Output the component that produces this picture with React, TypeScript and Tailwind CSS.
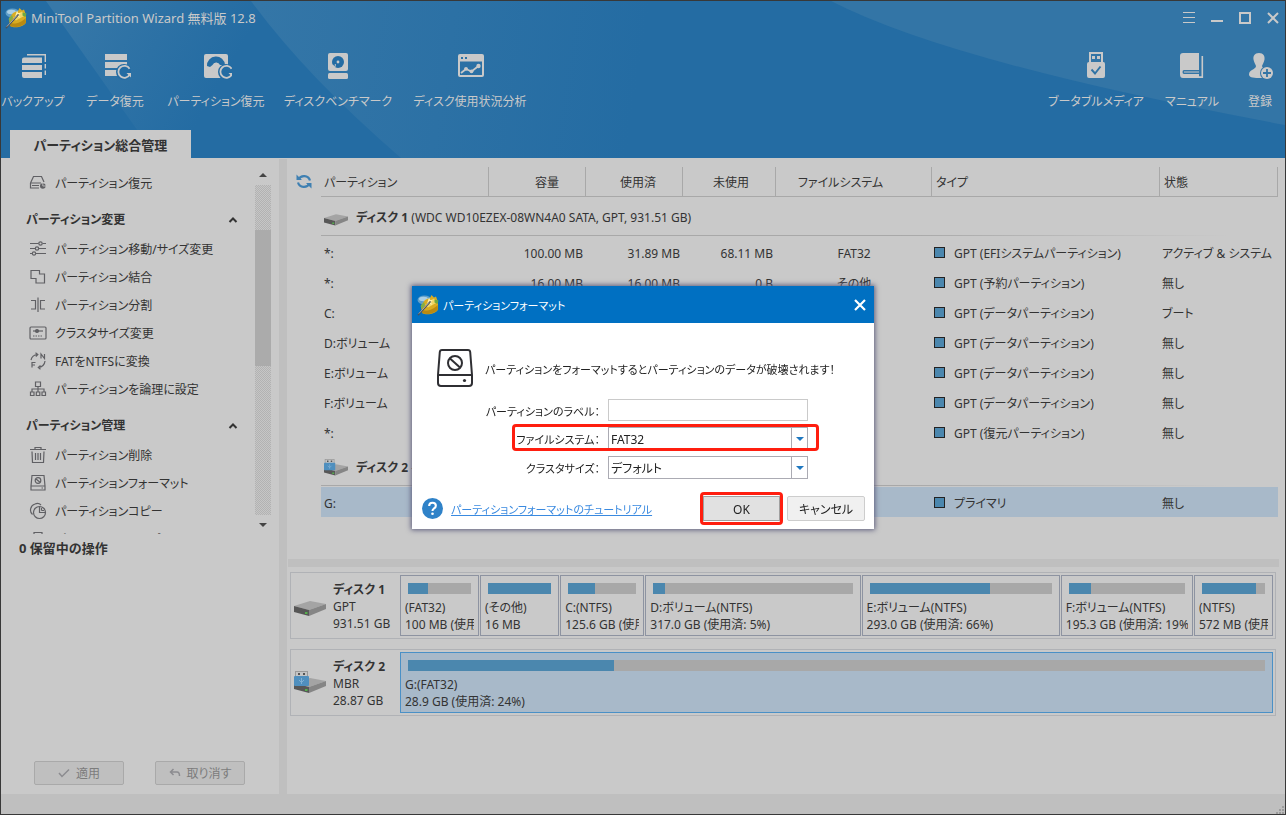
import { useState } from "react";
import type { ReactNode } from "react";
import clsx from "clsx";

const HEADER_BLUE = "#246ca3";

type Partition = {
  name: string;
  size: string;
  used: string;
  free: string;
  fs: string;
  type: string;
  status: string;
};

type Block = { name: string; info: string; used: number; grow: string };

const disk1: Partition[] = [
  { name: "*:", size: "100.00 MB", used: "31.89 MB", free: "68.11 MB", fs: "FAT32", type: "GPT (EFIシステムパーティション)", status: "アクティブ & システム" },
  { name: "*:", size: "16.00 MB", used: "16.00 MB", free: "0 B", fs: "その他", type: "GPT (予約パーティション)", status: "無し" },
  { name: "C:", size: "125.60 GB", used: "50.22 GB", free: "75.38 GB", fs: "NTFS", type: "GPT (データパーティション)", status: "ブート" },
  { name: "D:ボリューム", size: "317.00 GB", used: "17.02 GB", free: "299.98 GB", fs: "NTFS", type: "GPT (データパーティション)", status: "無し" },
  { name: "E:ボリューム", size: "293.00 GB", used: "193.40 GB", free: "99.60 GB", fs: "NTFS", type: "GPT (データパーティション)", status: "無し" },
  { name: "F:ボリューム", size: "195.30 GB", used: "37.11 GB", free: "158.19 GB", fs: "NTFS", type: "GPT (データパーティション)", status: "無し" },
  { name: "*:", size: "572.00 MB", used: "491.92 MB", free: "80.08 MB", fs: "NTFS", type: "GPT (復元パーティション)", status: "無し" },
];

const disk2: Partition[] = [
  { name: "G:", size: "28.87 GB", used: "6.93 GB", free: "21.94 GB", fs: "FAT32", type: "プライマリ", status: "無し" },
];

const blocks: Block[] = [
  { name: "(FAT32)", info: "100 MB (使用済: 32%)", used: 32, grow: "flex-[77]" },
  { name: "(その他)", info: "16 MB", used: 100, grow: "flex-[77]" },
  { name: "C:(NTFS)", info: "125.6 GB (使用済: 40%)", used: 40, grow: "flex-[82]" },
  { name: "D:ボリューム(NTFS)", info: "317.0 GB (使用済: 5%)", used: 6, grow: "flex-[213]" },
  { name: "E:ボリューム(NTFS)", info: "293.0 GB (使用済: 66%)", used: 66, grow: "flex-[196]" },
  { name: "F:ボリューム(NTFS)", info: "195.3 GB (使用済: 19%)", used: 19, grow: "flex-[130]" },
  { name: "(NTFS)", info: "572 MB (使用済: 86%)", used: 86, grow: "flex-[77]" },
];

/* ---------- icons ---------- */

function AppIcon() {
  return (
    <svg width="22" height="22" viewBox="0 0 22 22" aria-hidden="true">
      <ellipse cx="7.500" cy="6" rx="7" ry="4.500" fill="#5f9fc9" />
      <ellipse cx="6.500" cy="5" rx="4.500" ry="2.200" fill="#a9cfe6" />
      <path d="M4 11.500 L8 6 L11 4.500 L12.500 5 L14.500 1 L17 3.500 L19 2.500 L21 8 L21 15.500 C19 19.500 10 22 5 19 Z" fill="#d9ac22" />
      <path d="M8 11 L17 4.500 L20 8.500 L11 13.500 Z" fill="#efd767" />
      <path d="M17.500 5.500 L21.500 6.500 L20.500 10 L17.500 8.500 Z" fill="#6fa840" />
      <path d="M3.500 12 L7 8 L8 11 L5 15 Z" fill="#7fae4a" />
      <path d="M5 19 C10 21.500 18 19.500 21 15.500 L20.500 11 C17 15.500 10 17.500 5 16 Z" fill="#b98a12" />
      <path d="M12 3.500 L13.200 6 L16 5.800 L14 8 L15 11 L12.200 9.500 L9.800 11 L10.500 8 Z" fill="#fff0a8" />
      <path d="M1.500 20.500 L13 8" stroke="#4a5158" strokeWidth="1.700" strokeLinecap="round" />
      <path d="M1.800 19.600 L12 8.500" stroke="#c4c8cc" strokeWidth=".7" />
    </svg>
  );
}

function RestoreArrow({ x, y }: { x: number; y: number }) {
  return (
    <g transform={`translate(${x} ${y})`}>
      <circle r="8" fill={HEADER_BLUE} />
      <path d="M5.600 -3.200 A6 6 0 1 0 5.800 2.400" fill="none" stroke="#c9c9c9" strokeWidth="1.800" />
      <path d="M2.500 1 H7.200 V5.600 Z" fill="#c9c9c9" />
    </g>
  );
}

function ToolIcon({ children }: { children: ReactNode }) {
  return (
    <svg width="32" height="28" viewBox="-2 0 32 28" fill="#c9c9c9" aria-hidden="true">
      {children}
    </svg>
  );
}

const backupIcon = (
  <ToolIcon>
    <path d="M5 5.500 H23 V11 H3 V7.500 Q3 5.500 5 5.500 Z M3 13 H23 V18 H3 Z M3 20 H23 V26 H5 Q3 26 3 24 Z" />
    <path d="M8 2.700 H26.300 V10 M26.300 12 V16.500 M26.300 18.500 V23" fill="none" stroke="#c9c9c9" strokeWidth="1.400" />
  </ToolIcon>
);

const dataRestoreIcon = (
  <ToolIcon>
    <path d="M4 2 H26 V8 H4 Z M4 10 H26 V16 H4 Z M4 18 H18 V24 H4 Z" />
    <RestoreArrow x={23} y={20} />
  </ToolIcon>
);

const partitionRestoreIcon = (
  <ToolIcon>
    <rect x="2" y="2" width="24" height="24" rx="2" />
    <path d="M5 14 A9 9 0 0 1 23 13 L18 13 A4 4 0 0 0 10.500 13 L8 15 Z" fill={HEADER_BLUE} />
    <circle cx="14" cy="13" r="2.200" />
    <path d="M14 13 L10 21" stroke="#c9c9c9" strokeWidth="1.500" />
    <RestoreArrow x={24} y={20} />
  </ToolIcon>
);

const benchmarkIcon = (
  <ToolIcon>
    <rect x="4" y="1" width="20" height="18" rx="2" />
    <rect x="4" y="21" width="20" height="6" rx="1.500" />
    <circle cx="14" cy="10" r="6" fill={HEADER_BLUE} />
    <circle cx="14" cy="10" r="1.400" />
    <path d="M8 13 L12 12 L11 17 L7 17 Z" />
    <path d="M8.500 11.500 L11 12.500 L10.500 14.500" fill={HEADER_BLUE} />
  </ToolIcon>
);

const usageIcon = (
  <ToolIcon>
    <path fillRule="evenodd" d="M4 2 H26 Q28 2 28 4 V23 Q28 25 26 25 H4 Q2 25 2 23 V4 Q2 2 4 2 Z M4 9.500 V23 H26 V9.500 Z M5 5 V7 H7 V5 Z M9 5 V7 H11 V5 Z" />
    <path d="M5 21 L10 17 L15.500 19.500 L22.500 14" fill="none" stroke="#c9c9c9" strokeWidth="1.800" />
    <circle cx="10" cy="16.800" r="1.900" />
    <circle cx="15.500" cy="19.300" r="1.900" />
    <circle cx="22.500" cy="14" r="2.200" />
  </ToolIcon>
);

const bootableIcon = (
  <ToolIcon>
    <path fillRule="evenodd" d="M7 0 H21 V10 H21.500 Q23 10 23 12 V24 Q23 26 21 26 H7 Q5 26 5 24 V12 Q5 10 7 10 Z M9 2 V10 H19 V2 Z M10 4 H13 V7 H10 Z M15 4 H18 V7 H15 Z" />
    <path d="M9.500 17.500 L13 21.500 L18.500 14.500" fill="none" stroke="#2f73a5" strokeWidth="1.900" />
  </ToolIcon>
);

const manualIcon = (
  <ToolIcon>
    <path fillRule="evenodd" d="M5 1 H21 V18 H6 Q4.500 18 4.500 20 Q4.500 22 6 22 H21 V24.500 H25 V26 H5 Q2 26 2 22.500 V4 Q2 1 5 1 Z" />
    <path d="M24.300 4 V25.300 H12" fill="none" stroke="#c9c9c9" strokeWidth="1.600" />
    <path d="M6 20 H21" stroke="#c9c9c9" strokeWidth="1" />
  </ToolIcon>
);

const registerIcon = (
  <ToolIcon>
    <path d="M13 1 C17.500 1 19 4 18.500 7.500 C18 10.500 16.500 12.500 16 14 C16 17 24 17 24 22 C24 25 20 26 13 26 C6 26 3 25 3 22.500 C3 17.500 10 17.500 10 14 C9.500 12.500 8 10.500 7.500 7.500 C7 4 8.500 1 13 1 Z" />
    <circle cx="21" cy="21" r="7" fill="#3375a6" />
    <circle cx="21" cy="21" r="6" />
    <path d="M21 17 V25 M17 21 H25" stroke="#3375a6" strokeWidth="1.800" />
  </ToolIcon>
);

function SideIcon({ children }: { children: ReactNode }) {
  return (
    <svg width="18" height="18" viewBox="0 0 18 18" fill="none" stroke="#606064" strokeWidth="1.200" aria-hidden="true" className="shrink-0">
      {children}
    </svg>
  );
}

const recoverSide = (
  <SideIcon>
    <path d="M1.500 9 L4.500 2.500 H12.500 L15 8 M1.500 9 V14 H10 M1.500 9 H12 M3 11.500 H10" />
    <circle cx="13.800" cy="12" r="2.800" fill="#606064" stroke="none" />
    <path d="M13.800 12 V9 M13.800 12 H17" stroke="#c9c9c9" strokeWidth=".8" />
  </SideIcon>
);
const moveSide = (
  <SideIcon>
    <path d="M1 3.500 H9.500 M13.500 3.500 H17 M1 8.500 H6 M10 8.500 H17 M1 13.500 H3 M7 13.500 H17" />
    <circle cx="11.500" cy="3.500" r="1.700" />
    <circle cx="8" cy="8.500" r="1.700" />
    <circle cx="5" cy="13.500" r="1.700" />
  </SideIcon>
);
const mergeSide = (
  <SideIcon>
    <path d="M2 2.500 H10.500 V6 H15.500 V15 H7 V10.500 H2 Z" />
  </SideIcon>
);
const splitSide = (
  <SideIcon>
    <path d="M9 1.500 V16 M2 4.500 H6.500 V13 H2 M16 4.500 H11.500 V13 H16" />
  </SideIcon>
);
const clusterSide = (
  <SideIcon>
    <rect x="1" y="3" width="16" height="12" rx="1" />
    <path d="M4 7 H14" />
    <circle cx="8" cy="7" r="1.500" fill="#606064" />
    <path d="M4 12 H14" strokeDasharray="1.500 1" />
  </SideIcon>
);
const convertSide = (
  <SideIcon>
    <path d="M2 8 A7 7 0 0 1 8.500 2.500 M6.500 .8 L8.800 2.500 L6.800 4.500 M16 9 A7 7 0 0 1 9.500 15.500 M11.500 13.500 L9.300 15.500 L11.500 17.300" />
    <path d="M12 6.500 V2 L15.500 6.500 V2 M3 15.500 V10.500 H6.500 M3 13 H6" />
  </SideIcon>
);
const logicalSide = (
  <SideIcon>
    <path d="M6.500 2 H11.500 V6.500 H6.500 Z M9 6.500 V12 M3 12 V9 H15 V12" />
    <path d="M1.500 12 H5 V15.500 H1.500 Z M7.300 12 H10.800 V15.500 H7.300 Z M13 12 H16.500 V15.500 H13 Z" />
  </SideIcon>
);
const deleteSide = (
  <SideIcon>
    <path d="M1 3.500 H17 M6 3.500 V1.500 H12 V3.500 M3 5.500 L3.500 16.500 H14.500 L15 5.500 M6.500 7 V14 M9 7 V14 M11.500 7 V14" />
  </SideIcon>
);
const formatSide = (
  <SideIcon>
    <path d="M3 1.500 H15 L16 12 V16 H2 V12 Z M2 12 H16 M12.500 14 H14" />
    <circle cx="9" cy="6.500" r="2.800" />
    <path d="M7 5 L11 8.300" />
  </SideIcon>
);
const copySide = (
  <SideIcon>
    <circle cx="10.500" cy="10.500" r="6" />
    <path d="M10.500 4.500 V10.500 H16.500 M12.500 8.500 V6 M12.500 8.500 H15 M3.500 12.500 A6.200 6.200 0 0 1 6 2 Q9.500 .5 12 3" />
  </SideIcon>
);
const wipeSide = (
  <SideIcon>
    <path d="M5 4.500 V2.500 H13 V4.500 M3 6 H15 V16 H3 Z" />
  </SideIcon>
);

function DriveIcon({ usb, large }: { usb?: boolean; large?: boolean }) {
  return (
    <svg width={large ? 32 : 24} height={large ? 24 : 18} viewBox="0 0 32 24" aria-hidden="true" className="shrink-0">
      <path d="M0 12 L16 7 L32 10 L15 16 Z" fill="#a4a4a4" />
      <path d="M0 12 L15 16 V22 L0 18 Z" fill="#575757" />
      <path d="M15 16 L32 10 V15 L15 22 Z" fill="#858585" />
      <rect x="11" y="18" width="2.500" height="2" fill="#55b04c" />
      {usb && (
        <>
          <rect x="1.500" y=".5" width="12" height="7" fill="#c4c4c4" stroke="#9a9a9a" />
          <path d="M4 2 H6 V4 H4 Z M9 2 H11 V4 H9 Z" fill="#555" />
          <rect x="0" y="5" width="15" height="10" rx="1" fill="#4f8fbe" />
          <path d="M7.500 7 V13 M5 9 L7.500 11.500 L10 9" fill="none" stroke="#7fb0d4" />
        </>
      )}
    </svg>
  );
}

function FormatDiskIcon() {
  return (
    <svg width="36" height="38" viewBox="0 0 36 38" fill="none" stroke="#2f2f33" strokeWidth="2" aria-hidden="true" className="shrink-0">
      <path d="M5 1 H31 Q33 1 33.200 3 L35 26 V34 Q35 37 32 37 H4 Q1 37 1 34 V26 L2.800 3 Q3 1 5 1 Z M1 26 H35" />
      <circle cx="18" cy="14" r="7" />
      <path d="M13 9.500 L23 18.500" />
      <circle cx="27.500" cy="31.500" r="1.600" fill="#2f2f33" stroke="none" />
    </svg>
  );
}

/* ---------- header ---------- */

function HeaderButton({ label, width, children }: { label: string; width: string; children: ReactNode }) {
  return (
    <button type="button" className={clsx("flex flex-col items-center whitespace-nowrap", width)}>
      {children}
      <span className="mt-[13px] leading-[18px]">{label}</span>
    </button>
  );
}

function Header() {
  return (
    <header className="relative bg-[#246ca3] text-[#c9c9c9]">
      <svg className="absolute inset-0 h-full w-full" viewBox="0 0 1284 157" preserveAspectRatio="none" aria-hidden="true">
        <defs>
          <linearGradient id="beamLeft" gradientUnits="userSpaceOnUse" x1="60" y1="0" x2="215" y2="90">
            <stop offset="0" stopColor="#3778a8" />
            <stop offset="1" stopColor="#246ca3" />
          </linearGradient>
          <linearGradient id="beamMid" gradientUnits="userSpaceOnUse" x1="260" y1="0" x2="640" y2="60">
            <stop offset="0" stopColor="#3476a7" />
            <stop offset="1" stopColor="#246ca3" />
          </linearGradient>
        </defs>
        <path d="M45 0 L156 157 H380 L255 0 Z" fill="url(#beamLeft)" />
        <path d="M250 0 Q305 75 400 157 H700 V0 Z" fill="url(#beamMid)" />
        <path d="M830 0 Q950 62 1284 124 V0 Z" fill="#3375a6" />
      </svg>

      <div className="relative flex h-[35px] items-center justify-between pr-[6px] pb-[2px] pl-1">
        <div className="flex items-center gap-1">
          <AppIcon />
          <h1 className="text-[13px]">MiniTool Partition Wizard 無料版 12.8</h1>
        </div>
        <div className="flex items-center gap-4">
          <button type="button" aria-label="メニュー">
            <svg width="12" height="12" viewBox="0 0 12 12" stroke="#c9c9c9"><path d="M0 .5 H12 M0 5.500 H12 M0 10.500 H12" /></svg>
          </button>
          <button type="button" aria-label="最小化">
            <svg width="12" height="12" viewBox="0 0 12 12" stroke="#c9c9c9" strokeWidth="2"><path d="M0 9 H12" /></svg>
          </button>
          <button type="button" aria-label="最大化">
            <svg width="12" height="12" viewBox="0 0 12 12" fill="none" stroke="#c9c9c9" strokeWidth="2"><path d="M1 1 H11 V11 H1 Z" /></svg>
          </button>
          <button type="button" aria-label="閉じる">
            <svg width="12" height="12" viewBox="0 0 12 12" stroke="#c9c9c9" strokeWidth="2"><path d="M1 1 L11 11 M11 1 L1 11" /></svg>
          </button>
        </div>
      </div>

      <nav className="relative flex justify-between pt-4 pr-[9px] pl-1">
        <div className="flex gap-[26px]">
          <HeaderButton label="バックアップ" width="w-14">{backupIcon}</HeaderButton>
          <HeaderButton label="データ復元" width="w-14">{dataRestoreIcon}</HeaderButton>
          <HeaderButton label="パーティション復元" width="w-[94px]">{partitionRestoreIcon}</HeaderButton>
          <HeaderButton label="ディスクベンチマーク" width="w-[98px]">{benchmarkIcon}</HeaderButton>
          <HeaderButton label="ディスク使用状況分析" width="w-[114px]">{usageIcon}</HeaderButton>
        </div>
        <div className="flex gap-[26px]">
          <HeaderButton label="ブータブルメディア" width="w-[88px]">{bootableIcon}</HeaderButton>
          <HeaderButton label="マニュアル" width="w-[52px]">{manualIcon}</HeaderButton>
          <HeaderButton label="登録" width="w-8">{registerIcon}</HeaderButton>
        </div>
      </nav>

      <div className="relative mt-[19px] flex pl-[9px]">
        <button type="button" className="h-7 w-[181px] bg-[#c9c9c9] pt-[2px] text-[13px] font-bold text-[#333]">
          パーティション総合管理
        </button>
      </div>
    </header>
  );
}

/* ---------- sidebar ---------- */

function SideItem({ icon, label }: { icon: ReactNode; label: string }) {
  return (
    <li>
      <a href="#" className="flex h-7 items-center gap-2 pl-7 whitespace-nowrap">
        {icon}
        <span className="pt-[2px]">{label}</span>
      </a>
    </li>
  );
}

function SideSection({ title, children }: { title: string; children: ReactNode }) {
  return (
    <section>
      <h2 className="flex h-[38px] items-center justify-between pt-2 pr-[17px] pl-[25px] font-bold">
        {title}
        <svg width="10" height="8" viewBox="0 0 10 8" fill="none" stroke="#333" strokeWidth="2" aria-hidden="true">
          <path d="M1.500 6 L5 2.500 L8.500 6" />
        </svg>
      </h2>
      <ul>{children}</ul>
    </section>
  );
}

function SideScrollbar() {
  const dither =
    "bg-[repeating-conic-gradient(#b2b2b2_0_25%,#c6c6c6_0_50%)] bg-[length:2px_2px]";
  return (
    <div className="flex w-4 flex-col items-center pt-2" aria-hidden="true">
      <svg width="8" height="19" viewBox="0 0 8 19"><path d="M0 11 L4 7 L8 11 Z" fill="#444" /></svg>
      <div className={clsx("h-[45px] w-full", dither)} />
      <div className="h-[136px] w-full bg-[#ababab]" />
      <div className={clsx("w-full flex-1", dither)} />
      <svg width="8" height="19" viewBox="0 0 8 19"><path d="M0 8 L4 12 L8 8 Z" fill="#444" /></svg>
    </div>
  );
}

function Sidebar() {
  return (
    <aside className="flex w-[278px] shrink-0 flex-col">
      <div className="flex h-[376px] overflow-hidden">
        <div className="w-[254px] overflow-hidden pt-[11px]">
          <ul>
            <SideItem icon={recoverSide} label="パーティション復元" />
          </ul>
          <SideSection title="パーティション変更">
            <SideItem icon={moveSide} label="パーティション移動/サイズ変更" />
            <SideItem icon={mergeSide} label="パーティション結合" />
            <SideItem icon={splitSide} label="パーティション分割" />
            <SideItem icon={clusterSide} label="クラスタサイズ変更" />
            <SideItem icon={convertSide} label="FATをNTFSに変換" />
            <SideItem icon={logicalSide} label="パーティションを論理に設定" />
          </SideSection>
          <SideSection title="パーティション管理">
            <SideItem icon={deleteSide} label="パーティション削除" />
            <SideItem icon={formatSide} label="パーティションフォーマット" />
            <SideItem icon={copySide} label="パーティションコピー" />
            <SideItem icon={wipeSide} label="パーティションワイプ" />
          </SideSection>
        </div>
        <SideScrollbar />
      </div>

      <p className="pt-1 pl-[18px] text-[13px] leading-5 font-bold">0 保留中の操作</p>

      <div className="mt-auto flex gap-[31px] pb-[9px] pl-[33px] text-[#7c7c7c]">
        <button type="button" disabled className="flex h-6 w-[90px] items-center justify-center gap-[6px] rounded-xs border border-[#a9a9a9] bg-[#bfbfbf]">
          <svg width="12" height="10" viewBox="0 0 12 10" fill="none" stroke="#8c8c90" strokeWidth="1.500" aria-hidden="true"><path d="M1 5 L4 8.500 L11 1.500" /></svg>
          <span className="pt-[2px]">適用</span>
        </button>
        <button type="button" disabled className="flex h-6 w-[90px] items-center justify-center gap-[6px] rounded-xs border border-[#a9a9a9] bg-[#bfbfbf]">
          <svg width="12" height="10" viewBox="0 0 12 10" fill="none" stroke="#8c8c90" strokeWidth="1.500" aria-hidden="true"><path d="M4.500 1 L1.500 4 L4.500 7 M1.500 4 H8 Q10.500 4 10.500 8" /></svg>
          <span className="pt-[2px]">取り消す</span>
        </button>
      </div>
    </aside>
  );
}

/* ---------- partition table ---------- */

function GroupRow({ usb, title, detail }: { usb?: boolean; title: string; detail: string }) {
  return (
    <tr>
      <th colSpan={7} scope="colgroup" className="h-10 p-0 text-left font-normal">
        <div className="flex h-[38px] items-center gap-2 pt-1 pl-[3px]">
          <DriveIcon usb={usb} />
          <span>
            <b>{title}</b> {detail}
          </span>
        </div>
        <div className="mb-px h-px bg-linear-to-r from-[#a8a8a8] from-60% to-[#c9c9c9] to-95%" />
      </th>
    </tr>
  );
}

function PartitionRow({ p, selected }: { p: Partition; selected?: boolean }) {
  return (
    <tr className={clsx("h-[30px]", selected && "bg-[#a8b9c9]")}>
      <td className="pt-1 pl-[3px]">{p.name}</td>
      <td className="pt-1 pr-[3px] text-right">{p.size}</td>
      <td className="pt-1 pr-[3px] text-right">{p.used}</td>
      <td className="pt-1 pr-[3px] text-right">{p.free}</td>
      <td className="pt-1 text-center">{p.fs}</td>
      <td className="pl-[2px]">
        <span className="flex items-center gap-[9px]">
          <span className="size-[11px] border border-[#222] bg-[#4b87ae]" />
          <span className="pt-[3px]">{p.type}</span>
        </span>
      </td>
      <td className="pt-1 pl-[2px]">{p.status}</td>
    </tr>
  );
}

function PartitionTable() {
  const th = "border-r border-b border-[#a8a8a8] pt-[3px] font-normal";
  return (
    <div className="flex gap-[9px] pt-[9px] pr-[7px] pb-[42px] pl-[9px]">
      <button type="button" aria-label="更新" className="mt-[6px] h-[17px] w-4 shrink-0">
        <svg width="16" height="17" viewBox="0 0 16 17" fill="none" stroke="#3f80b2" strokeWidth="2.200">
          <path d="M2.500 6.500 A6.200 6.200 0 0 1 14 7.500 M13.500 10.500 A6.200 6.200 0 0 1 2 9.500" />
          <path d="M.5 1.500 V7 H6 Z M15.500 15.500 V10 H10 Z" fill="#3f80b2" stroke="none" />
        </svg>
      </button>
      <table className="w-full min-w-0 table-fixed border-separate border-spacing-0 whitespace-nowrap">
        <colgroup>
          <col className="w-[168px]" />
          <col className="w-[97px]" />
          <col className="w-[97px]" />
          <col className="w-[93px]" />
          <col className="w-[156px]" />
          <col className="w-[228px]" />
          <col />
        </colgroup>
        <thead>
          <tr className="h-[30px]">
            <th scope="col" className={clsx(th, "pl-[3px] text-left")}>パーティション</th>
            <th scope="col" className={clsx(th, "pr-[26px] text-right")}>容量</th>
            <th scope="col" className={clsx(th, "pr-[26px] text-right")}>使用済</th>
            <th scope="col" className={clsx(th, "pr-[26px] text-right")}>未使用</th>
            <th scope="col" className={clsx(th, "pr-[26px] text-center")}>ファイルシステム</th>
            <th scope="col" className={clsx(th, "pl-1 text-left")}>タイプ</th>
            <th scope="col" className={clsx(th, "pl-1 text-left")}>状態</th>
          </tr>
        </thead>
        <tbody>
          <GroupRow title="ディスク 1" detail="(WDC WD10EZEX-08WN4A0 SATA, GPT, 931.51 GB)" />
          {disk1.map((p, i) => (
            <PartitionRow key={i} p={p} />
          ))}
          <GroupRow usb title="ディスク 2" detail="- (USB, リムーバブル, MBR, 28.87 GB)" />
          {disk2.map((p) => (
            <PartitionRow key={p.name} p={p} selected />
          ))}
        </tbody>
      </table>
    </div>
  );
}

/* ---------- disk map ---------- */

function DiskBlock({ block, selected }: { block: Block; selected?: boolean }) {
  return (
    <div
      className={clsx(
        "h-[61px] min-w-0 overflow-hidden border pt-[7px] whitespace-nowrap",
        block.grow,
        selected ? "border-[#4a90c6] bg-[#a8b9c9]" : "border-[#8d93a1]",
      )}
    >
      <div className="mx-[7px] h-[11px] bg-[#a8a8a8]">
        <div className="h-full bg-[#4b87ae]" style={{ width: `${block.used}%` }} />
      </div>
      <div className="mr-1 ml-1 overflow-hidden pt-[5px] leading-[17px]">
        <p>{block.name}</p>
        <p>{block.info}</p>
      </div>
    </div>
  );
}

function DiskPanel({ usb, name, scheme, size, children }: { usb?: boolean; name: string; scheme: string; size: string; children: ReactNode }) {
  return (
    <div className="flex border border-[#b0b2b6] p-[2px]">
      <div className="flex w-[107px] shrink-0 items-center gap-[7px] pl-px whitespace-nowrap">
        <DriveIcon usb={usb} large />
        <div className="pt-[2px] leading-[17px]">
          <p className="font-bold">{name}</p>
          <p>{scheme}</p>
          <p>{size}</p>
        </div>
      </div>
      <div className="flex min-w-0 flex-1 gap-px">{children}</div>
    </div>
  );
}

/* ---------- format dialog ---------- */

function DialogSelect({ id, value, onChange, options }: { id: string; value: string; onChange: (v: string) => void; options: string[] }) {
  return (
    <div className="relative h-[23px] w-[200px]">
      <select
        id={id}
        value={value}
        onChange={(e) => onChange(e.target.value)}
        className="h-full w-full appearance-none border border-[#ababb3] bg-white pt-[2px] pl-[2px] outline-none"
      >
        {options.map((o) => (
          <option key={o}>{o}</option>
        ))}
      </select>
      <span className="pointer-events-none absolute inset-y-px right-px flex w-4 items-center justify-center border-l border-[#ababb3]">
        <svg width="8" height="4" viewBox="0 0 8 4" aria-hidden="true"><path d="M0 0 H8 L4 4 Z" fill="#1f78c1" /></svg>
      </span>
    </div>
  );
}

function FormatDialog() {
  const [label, setLabel] = useState("");
  const [fileSystem, setFileSystem] = useState("FAT32");
  const [clusterSize, setClusterSize] = useState("デフォルト");

  const labelClass = "pt-[3px] text-right text-[11px] whitespace-nowrap";

  return (
    <div className="fixed inset-0 flex items-center justify-center">
      <div role="dialog" aria-labelledby="dialog-title" className="w-[462px] bg-white text-[#222] shadow-[0_0_5px_1px_#5c5c7c]">
        <div className="flex h-[37px] items-center gap-1 bg-[#0070c2] pr-2 pl-[5px] text-white">
          <AppIcon />
          <h2 id="dialog-title" className="flex-1 pt-[2px] text-[11px]">パーティションフォーマット</h2>
          <button type="button" aria-label="閉じる">
            <svg width="12" height="12" viewBox="0 0 12 12" stroke="#fff" strokeWidth="2.200"><path d="M1 1 L11 11 M11 1 L1 11" /></svg>
          </button>
        </div>

        <div className="flex items-center gap-3 pt-[26px] pl-[25px] whitespace-nowrap">
          <FormatDiskIcon />
          <p className="pt-1 text-[11px]">パーティションをフォーマットするとパーティションのデータが破壊されます！</p>
        </div>

        <form className="pb-1" onSubmit={(e) => e.preventDefault()}>
          <div className="relative mt-3 grid grid-cols-[188px_200px] items-center gap-x-2 gap-y-[6px]">
            <label htmlFor="part-label" className={labelClass}>パーティションのラベル：</label>
            <input
              id="part-label"
              value={label}
              onChange={(e) => setLabel(e.target.value)}
              className="h-[22px] w-full border border-[#cacaca] px-[2px] outline-none"
            />
            <label htmlFor="part-fs" className={labelClass}>ファイルシステム：</label>
            <DialogSelect id="part-fs" value={fileSystem} onChange={setFileSystem} options={["FAT32", "NTFS", "exFAT", "Ext4"]} />
            <label htmlFor="part-cluster" className={labelClass}>クラスタサイズ：</label>
            <DialogSelect id="part-cluster" value={clusterSize} onChange={setClusterSize} options={["デフォルト", "4 KB", "8 KB", "16 KB"]} />
            <div className="pointer-events-none absolute top-[25px] left-[100px] h-[27px] w-[307px] rounded-sm border-3 border-[#ff1e0f]" />
          </div>

          <div className="mt-[13px] flex items-center gap-1 pr-[9px] pl-[10px]">
            <div className="flex flex-1 items-center gap-2">
              <svg width="21" height="21" viewBox="0 0 22 22" aria-hidden="true">
                <circle cx="11" cy="11" r="11" fill="#2f82c8" />
                <path d="M7.500 8.500 Q7.500 5 11 5 Q14.500 5 14.500 8 Q14.500 9.800 12.500 11 Q11 12 11 13.500" fill="none" stroke="#fff" strokeWidth="2.200" />
                <circle cx="11" cy="16.500" r="1.400" fill="#fff" />
              </svg>
              <a href="#" className="pt-[2px] text-[11px] whitespace-nowrap text-[#3a8ae0] underline">パーティションフォーマットのチュートリアル</a>
            </div>
            <div className="rounded-sm border-3 border-[#ff1e0f] py-px">
              <button type="submit" className="block h-[25px] w-[77px] border border-[#a0a0a0] bg-[#e1e1e1] pt-[3px]">OK</button>
            </div>
            <button type="button" className="h-[25px] w-[78px] rounded-xs border border-[#cdcdcd] bg-[#f0f0f0] pt-[3px]">キャンセル</button>
          </div>
        </form>
      </div>
    </div>
  );
}

export default function App() {
  return (
    <div className="flex min-h-screen flex-col border border-[#383838] bg-[#c9c9c9] font-['Noto_Sans','Noto_Sans_CJK_JP',sans-serif] text-[12px] leading-[18px] text-[#333] [font-feature-settings:'palt']">
      <Header />
      <div className="flex flex-1">
        <Sidebar />
        <div className="mt-px w-2 shrink-0 bg-[#bfbfbf]" />
        <main className="flex min-w-0 flex-1 flex-col">
          <PartitionTable />
          <div className="mr-[6px] ml-px h-2 bg-[#bfbfbf]" />
          <div className="flex flex-col gap-[10px] pt-[5px] pr-[9px] pl-[3px]">
            <DiskPanel name="ディスク 1" scheme="GPT" size="931.51 GB">
              {blocks.map((b, i) => (
                <DiskBlock key={i} block={b} />
              ))}
            </DiskPanel>
            <DiskPanel usb name="ディスク 2" scheme="MBR" size="28.87 GB">
              <DiskBlock block={{ name: "G:(FAT32)", info: "28.9 GB (使用済: 24%)", used: 24, grow: "flex-1" }} selected />
            </DiskPanel>
          </div>
        </main>
      </div>
      <footer className="flex h-5 items-end justify-end bg-[#bfbfbf] pr-px">
        <svg width="8" height="8" viewBox="0 0 8 8" fill="#9c9c9c" aria-hidden="true">
          <path d="M6 0 H8 V2 H6 Z M3 3 H5 V5 H3 Z M6 3 H8 V5 H6 Z M0 6 H2 V8 H0 Z M3 6 H5 V8 H3 Z M6 6 H8 V8 H6 Z" />
        </svg>
      </footer>
      <FormatDialog />
    </div>
  );
}
